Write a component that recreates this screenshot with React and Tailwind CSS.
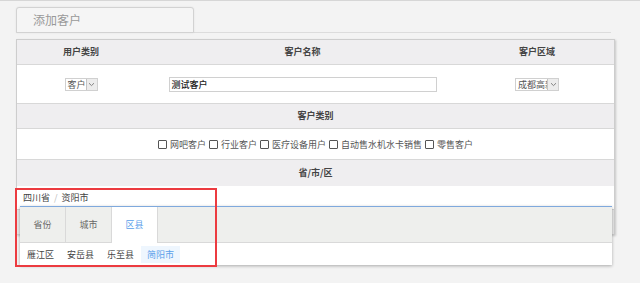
import React from "react";

const font = "font-['Noto_Sans_CJK_SC','Noto_Sans',sans-serif]";

function Checkbox({ label }) {
  return (
    <span className="flex items-center gap-[3px]">
      <span className="w-[9px] h-[9px] border border-[#555] rounded-[1px] bg-white" />
      <span className="text-[9px] leading-none text-[#555]">{label}</span>
    </span>
  );
}

function Chevron() {
  return (
    <svg width="7" height="5" viewBox="0 0 7 5" fill="none">
      <path d="M1 1.2 L3.5 3.6 L6 1.2" stroke="#777" strokeWidth="0.9" />
    </svg>
  );
}

function MiniSelect({ text, width }) {
  return (
    <div
      className={`flex items-stretch h-[13px] border border-[#d0d0d0] bg-white overflow-hidden ${width}`}
    >
      <span className="flex-1 overflow-hidden whitespace-nowrap text-[9px] leading-[11px] text-[#555] pl-[2px]">
        {text}
      </span>
      <span className="w-[11px] shrink-0 flex items-center justify-center bg-[#ececec] border-l border-[#c4c4c4]">
        <Chevron />
      </span>
    </div>
  );
}

export default function App() {
  return (
    <div
      className={`relative w-[640px] h-[283px] overflow-hidden bg-[#f3f3f3] border-t border-[#d6d6d6] ${font}`}
    >
      {/* title tab */}
      <div className="mt-[6px] ml-4 w-[595px] border-b border-[#dcdcdc]">
        <div className="w-[178px] h-[26px] -mb-px border border-[#d2d2d2] rounded-t-[3px] bg-[#f5f5f5] shadow-[0_0_2px_rgba(0,0,0,0.08)] pl-4 text-[12px] leading-[24px] text-[#999]">
          添加客户
        </div>
      </div>

      {/* main panel */}
      <div className="mt-[6px] ml-4 w-[599px] border border-[#cdcdcd] bg-white shadow-[1px_1px_2px_rgba(0,0,0,0.18)]">
        <div className="flex h-[25px] items-center bg-[#efeef0] border-b border-[#d8d8d8] text-[9px] font-semibold text-[#444]">
          <div className="w-[128px] text-center">用户类别</div>
          <div className="flex-1 text-center">客户名称</div>
          <div className="w-[154px] text-center">客户区域</div>
        </div>
        <div className="flex h-[39px] items-center border-b border-[#d8d8d8]">
          <div className="w-[128px] flex justify-center">
            <MiniSelect text="客户" width="w-[33px]" />
          </div>
          <div className="flex-1 flex justify-center">
            <div className="w-[268px] h-[15px] border border-[#d0d0d0] bg-white pl-[2px] text-[9px] leading-[13px] font-medium text-[#222]">
              测试客户
            </div>
          </div>
          <div className="w-[154px] flex justify-center">
            <MiniSelect text="成都高新" width="w-[44px]" />
          </div>
        </div>
        <div className="flex h-[25px] items-center justify-center bg-[#efeef0] border-b border-[#d8d8d8] text-[9px] font-semibold text-[#444]">
          客户类别
        </div>
        <div className="flex h-[31px] items-center justify-center gap-[3px] border-b border-[#d8d8d8]">
          <Checkbox label="网吧客户" />
          <Checkbox label="行业客户" />
          <Checkbox label="医疗设备用户" />
          <Checkbox label="自动售水机水卡销售" />
          <Checkbox label="零售客户" />
        </div>
        <div className="flex h-[26px] items-center justify-center bg-[#efeef0] text-[9px] font-semibold text-[#444]">
          省/市/区
        </div>
        <div className="flex h-[23px] items-center pl-[6px] text-[9px] text-[#444]">
          <span>四川省</span>
          <span className="mx-[4px] text-[#bbb]">/</span>
          <span>资阳市</span>
        </div>
        <div className="h-[25px] bg-[#e6e6e6] border-t border-[#d0d0d0]" />
      </div>

      {/* dropdown popup */}
      <div className="absolute left-[20px] top-[205px] w-[592px] border-t border-[#7fa9dd] bg-white shadow-[0_1px_3px_rgba(0,0,0,0.3)]">
        <div className="flex h-[36px] bg-[#eeefed] border-b border-[#d9d9d9]">
          <div className="w-[46px] flex items-center justify-center border-r border-[#d9d9d9] text-[9px] text-[#666]">
            省份
          </div>
          <div className="w-[46px] flex items-center justify-center border-r border-[#d9d9d9] text-[9px] text-[#666]">
            城市
          </div>
          <div className="w-[46px] -mb-px flex items-center justify-center border-r border-[#d9d9d9] bg-white text-[9px] text-[#5aa0ea]">
            区县
          </div>
        </div>
        <div className="flex h-[22px] items-center gap-[1px] pl-px">
          <span className="px-[6px] h-[17px] leading-[17px] text-[9px] text-[#444]">雁江区</span>
          <span className="px-[6px] h-[17px] leading-[17px] text-[9px] text-[#444]">安岳县</span>
          <span className="px-[6px] h-[17px] leading-[17px] text-[9px] text-[#444]">乐至县</span>
          <span className="px-[6px] h-[17px] leading-[17px] text-[9px] text-[#5aa0ea] bg-[#eef6fe]">简阳市</span>
        </div>
      </div>

      {/* red annotation box */}
      <div className="absolute left-[15px] top-[187px] w-[202px] h-[79px] border-2 border-[#ec3b40]" />
    </div>
  );
}
